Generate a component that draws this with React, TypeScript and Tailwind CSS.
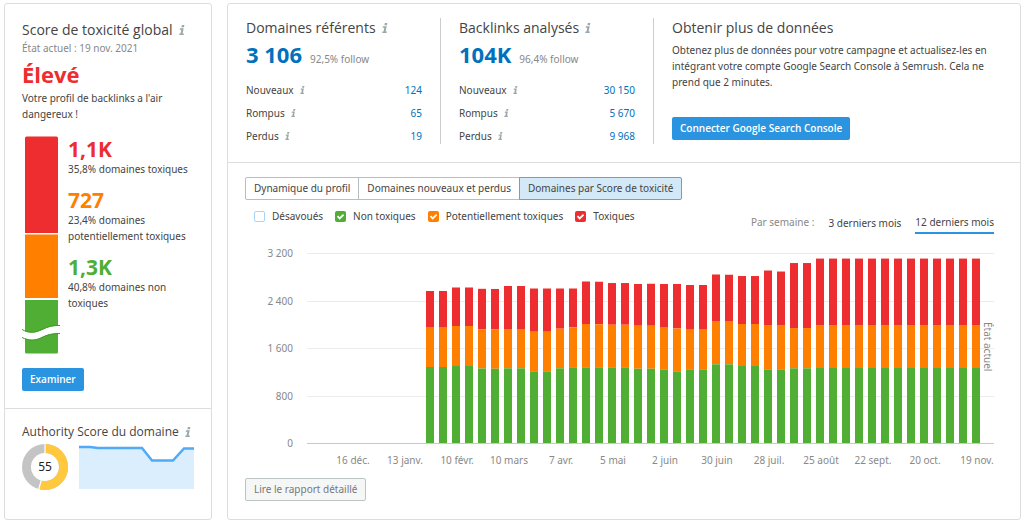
import { ReactNode } from 'react';

type Stat = { label: string; value: string };

// [non toxiques, + potentiellement toxiques, + toxiques], cumulés par semaine
const WEEKS: number[][] = [
  [1280, 1942, 2560],
  [1280, 1942, 2560],
  [1297, 1970, 2619],
  [1297, 1970, 2619],
  [1255, 1915, 2597],
  [1251, 1915, 2594],
  [1258, 1920, 2644],
  [1258, 1920, 2644],
  [1207, 1874, 2602],
  [1207, 1874, 2602],
  [1258, 1925, 2602],
  [1275, 1948, 2602],
  [1275, 2004, 2720],
  [1275, 2000, 2716],
  [1275, 1992, 2694],
  [1275, 1992, 2694],
  [1251, 1975, 2678],
  [1251, 1975, 2682],
  [1234, 1942, 2678],
  [1207, 1931, 2678],
  [1241, 1908, 2661],
  [1241, 1908, 2661],
  [1325, 2043, 2838],
  [1325, 2043, 2834],
  [1297, 2004, 2812],
  [1297, 2004, 2812],
  [1241, 1987, 2905],
  [1241, 1987, 2888],
  [1258, 1936, 3031],
  [1258, 1936, 3031],
  ...Array.from({ length: 13 }, () => [1263, 1987, 3106]),
];

const MONTHS = [
  '16 déc.',
  '13 janv.',
  '10 févr.',
  '10 mars',
  '7 avr.',
  '5 mai',
  '2 juin',
  '30 juin',
  '28 juil.',
  '25 août',
  '22 sept.',
  '20 oct.',
  '19 nov.',
];

const TICKS = [3200, 2400, 1600, 800, 0];

const LEGEND = [
  { id: 'disavowed', label: 'Désavoués', checked: false, box: 'border border-[#a9d4f5] bg-white' },
  { id: 'safe', label: 'Non toxiques', checked: true, box: 'bg-[#4fae33]' },
  { id: 'potential', label: 'Potentiellement toxiques', checked: true, box: 'bg-[#ff7f00]' },
  { id: 'toxic', label: 'Toxiques', checked: true, box: 'bg-[#ed2d2f]' },
];

const TABS = ['Dynamique du profil', 'Domaines nouveaux et perdus', 'Domaines par Score de toxicité'];

const Info = ({ small = false }: { small?: boolean }) => (
  <svg viewBox="0 0 6 10" className={small ? 'h-2 w-[5px] shrink-0' : 'h-2.5 w-1.5 shrink-0'} fill="#9ba8ab" aria-hidden="true">
    <path d="M2.900 0h2.500l-.5 2.200H2.400zM1 3.200h3.700L3.600 8.500h1.300L4.600 10H.2l.3-1.500h1l.8-3.800H.7z" />
  </svg>
);

const Heading = ({ children, info = true }: { children: ReactNode; info?: boolean }) => (
  <h2 className="flex items-center gap-1.5 whitespace-nowrap font-['Open_Sans',sans-serif] text-sm leading-5 text-[#444]">
    {children}
    {info && <Info />}
  </h2>
);

const StatColumn = ({ title, total, follow, stats }: { title: string; total: string; follow: string; stats: Stat[] }) => (
  <div className="mr-[18px] w-[195px] shrink-0 border-r border-[#ccc] pr-[18px]">
    <Heading>{title}</Heading>
    <p className="mt-0.5 flex items-baseline gap-2 whitespace-nowrap">
      <a href="#" className="font-['Open_Sans',sans-serif] text-[22px] leading-7 font-bold text-[#0071bc]">
        {total}
      </a>
      <span className="text-[#888]">{follow}</span>
    </p>
    <ul className="mt-3.5 flex flex-col gap-[7px]">
      {stats.map(stat => (
        <li key={stat.label} className="flex items-center gap-1.5 leading-4">
          {stat.label}
          <Info small />
          <a href="#" className="ml-auto text-[#0071bc]">
            {stat.value}
          </a>
        </li>
      ))}
    </ul>
  </div>
);

const ToxicityBar = () => (
  <svg viewBox="0 0 38 218" className="h-[218px] w-[38px] shrink-0" aria-hidden="true">
    <path d="M3 97V2q0-1.500 1.500-1.500h30q1.500 0 1.500 1.500v95z" fill="#ed2d2f" />
    <path d="M3 98.500h33v63.500H3z" fill="#ff7f00" />
    <path d="M3 164h33v52q0 1.500-1.500 1.500h-30Q3 217.500 3 216z" fill="#4fae33" />
    <path d="M0 194c7 4 14 3 20 0 6-3 11-4.500 18-4v7c-7 0-12 1-18 4-7 3.500-13 3.500-20 0z" fill="#fff" />
    <path d="M0 193.500c7 4 14 3 20 0 6-3 11-4.500 18-4M0 201.500c7 3.500 13 3.500 20 0 6-3 11-4 18-4" fill="none" stroke="#459b2c" strokeWidth="1" />
  </svg>
);

const Share = ({ value, label, color }: { value: string; label: string; color: string }) => (
  <div>
    <p className={`font-['Open_Sans',sans-serif] text-[21px] leading-6 font-bold ${color}`}>{value}</p>
    <p className="leading-4">{label}</p>
  </div>
);

const ScoreDonut = () => (
  <svg viewBox="0 0 46 46" className="size-[46px] shrink-0" role="img" aria-label="55">
    <g fill="none" strokeWidth="9" transform="rotate(-90 23 23)">
      <circle cx="23" cy="23" r="18.500" stroke="#c4c4c4" />
      <circle cx="23" cy="23" r="18.500" stroke="#ffc83f" pathLength="100" strokeDasharray="54.500 100" />
    </g>
    <path d="M23 0v10M19.500 35.500 16.500 46" stroke="#fff" strokeWidth="1.200" />
    <text x="23" y="27" textAnchor="middle" fontSize="12" fill="#222">
      55
    </text>
  </svg>
);

const Sparkline = () => (
  <svg viewBox="0 0 115 44" preserveAspectRatio="none" className="h-11 min-w-0 flex-1" aria-hidden="true">
    <path d="M0 2h11l8 1h44l10 12.500h21L105 3.500h10V44H0z" fill="#dbeefd" />
    <path d="M0 2h11l8 1h44l10 12.500h21L105 3.500h10" fill="none" stroke="#4fabf5" strokeWidth="2.500" />
  </svg>
);

const PLOT_LEFT = 62;
const BASELINE = 200;
const toY = (count: number) => BASELINE - (count / 3200) * 190;
const formatTick = (n: number) => (n >= 1000 ? `${Math.floor(n / 1000)} ${n % 1000}` : `${n}`);

const ToxicityChart = () => (
  <svg viewBox="0 0 749 227" className="mt-[9px] block w-full" fontSize="10" fill="#888" role="img" aria-label="Domaines par Score de toxicité">
    {TICKS.map(tick => (
      <g key={tick}>
        <rect x={PLOT_LEFT} y={Math.round(toY(tick))} width="687" height="1" fill={tick === 0 ? '#c5cbcd' : '#e9edee'} />
        <text x="48" y={toY(tick) + 4} textAnchor="end">
          {formatTick(tick)}
        </text>
      </g>
    ))}
    {WEEKS.map(([safe, potential, toxic], i) => {
      const x = 181 + i * 13;
      return (
        <g key={i}>
          <rect x={x} y={toY(toxic)} width="8" height={toY(potential) - toY(toxic)} fill="#ed2d2f" />
          <rect x={x} y={toY(potential)} width="8" height={toY(safe) - toY(potential)} fill="#ff7f00" />
          <rect x={x} y={toY(safe)} width="8" height={BASELINE - toY(safe)} fill="#4fae33" />
        </g>
      );
    })}
    <text transform="translate(739 79) rotate(90)">État actuel</text>
    {MONTHS.map((month, i) => (
      <text key={month} x={108 + i * 52} y="221" textAnchor="middle">
        {month}
      </text>
    ))}
  </svg>
);

const LegendItem = ({ id, label, checked, box }: (typeof LEGEND)[number]) => (
  <label htmlFor={id} className="flex items-center gap-[7px] whitespace-nowrap">
    <span className="grid">
      <input id={id} type="checkbox" defaultChecked={checked} className={`peer col-start-1 row-start-1 size-[11px] appearance-none rounded-[2px] ${box}`} />
      <svg viewBox="0 0 11 11" className="pointer-events-none invisible col-start-1 row-start-1 size-[11px] peer-checked:visible" fill="none" stroke="#fff" strokeWidth="1.800">
        <path d="M2.500 5.200 4.700 7.400 8.600 3.600" />
      </svg>
    </span>
    {label}
  </label>
);

const App = () => {
  return (
    <main className="flex gap-[15px] py-[3px] pr-[3px] pl-1 font-['Noto_Sans','Open_Sans',sans-serif] text-[10px] text-[#444]">
      <aside className="flex w-52 shrink-0 flex-col rounded-[3px] border border-[#ddd]">
        <section className="border-b border-[#ddd] px-[17px] pt-4 pb-[17px]">
          <Heading>Score de toxicité global</Heading>
          <p className="leading-4 text-[#888]">État actuel : 19 nov. 2021</p>
          <p className="mt-1 font-['Open_Sans',sans-serif] text-[22px] leading-7 font-bold text-[#ed2d2f]">Élevé</p>
          <p className="mt-0.5 leading-4">Votre profil de backlinks a l'air dangereux !</p>
          <div className="mt-3.5 flex gap-2">
            <ToxicityBar />
            <div className="flex flex-col gap-[11px] pt-px">
              <Share value="1,1K" label="35,8% domaines toxiques" color="text-[#ed2d2f]" />
              <Share value="727" label="23,4% domaines potentiellement toxiques" color="text-[#ff7f00]" />
              <Share value="1,3K" label="40,8% domaines non toxiques" color="text-[#4fae33]" />
            </div>
          </div>
          <button type="button" className="mt-3.5 h-[23px] rounded-[2px] bg-[#2b94e1] px-2 font-['Open_Sans',sans-serif] font-semibold text-white">
            Examiner
          </button>
        </section>
        <section className="px-[17px] pt-[13px]">
          <h2 className="flex items-center gap-1.5 font-['Open_Sans',sans-serif] text-xs leading-5 whitespace-nowrap">
            Authority Score du domaine
            <Info />
          </h2>
          <div className="mt-0.5 flex items-center gap-[11px]">
            <ScoreDonut />
            <Sparkline />
          </div>
        </section>
      </aside>

      <div className="min-w-0 flex-1 rounded-[3px] border border-[#ddd]">
        <section className="flex border-b border-[#ddd] pt-3.5 pr-[26px] pb-[18px] pl-[18px]">
          <StatColumn
            title="Domaines référents"
            total="3 106"
            follow="92,5% follow"
            stats={[
              { label: 'Nouveaux', value: '124' },
              { label: 'Rompus', value: '65' },
              { label: 'Perdus', value: '19' },
            ]}
          />
          <StatColumn
            title="Backlinks analysés"
            total="104K"
            follow="96,4% follow"
            stats={[
              { label: 'Nouveaux', value: '30 150' },
              { label: 'Rompus', value: '5 670' },
              { label: 'Perdus', value: '9 968' },
            ]}
          />
          <div className="min-w-0 flex-1">
            <Heading info={false}>Obtenir plus de données</Heading>
            <p className="mt-1 leading-4">
              Obtenez plus de données pour votre campagne et actualisez-les en intégrant votre compte Google Search Console à Semrush. Cela ne prend que 2 minutes.
            </p>
            <button type="button" className="mt-[27px] h-[23px] rounded-[2px] bg-[#2b94e1] px-2 font-['Open_Sans',sans-serif] font-semibold whitespace-nowrap text-white">
              Connecter Google Search Console
            </button>
          </div>
        </section>

        <section className="pt-3.5 pr-[26px] pb-[18px] pl-[17px]">
          <div className="flex">
            {TABS.map((tab, i) => (
              <button
                key={tab}
                type="button"
                className={`-mr-px h-[23px] border px-2 whitespace-nowrap first:rounded-l-[2px] last:rounded-r-[2px] ${i === 2 ? 'border-[#4fa8e8] bg-[#d3e9f8]' : 'border-[#b5bfc2]'}`}
              >
                {tab}
              </button>
            ))}
          </div>
          <div className="flex items-start justify-between">
            <div className="flex gap-3 pt-2 pl-[9px] leading-4">
              {LEGEND.map(item => (
                <LegendItem key={item.id} {...item} />
              ))}
            </div>
            <div className="flex gap-3.5 pt-3 leading-5">
              <span className="text-[#888]">Par semaine :</span>
              <button type="button">3 derniers mois</button>
              <button type="button" className="border-b-2 border-[#2b94e1]">
                12 derniers mois
              </button>
            </div>
          </div>
          <ToxicityChart />
          <button type="button" className="mt-2 h-[23px] rounded-[2px] border border-[#bcc4c6] bg-[#f5f7f7] px-2 text-[#777]">
            Lire le rapport détaillé
          </button>
        </section>
      </div>
    </main>
  );
};

export default App;
